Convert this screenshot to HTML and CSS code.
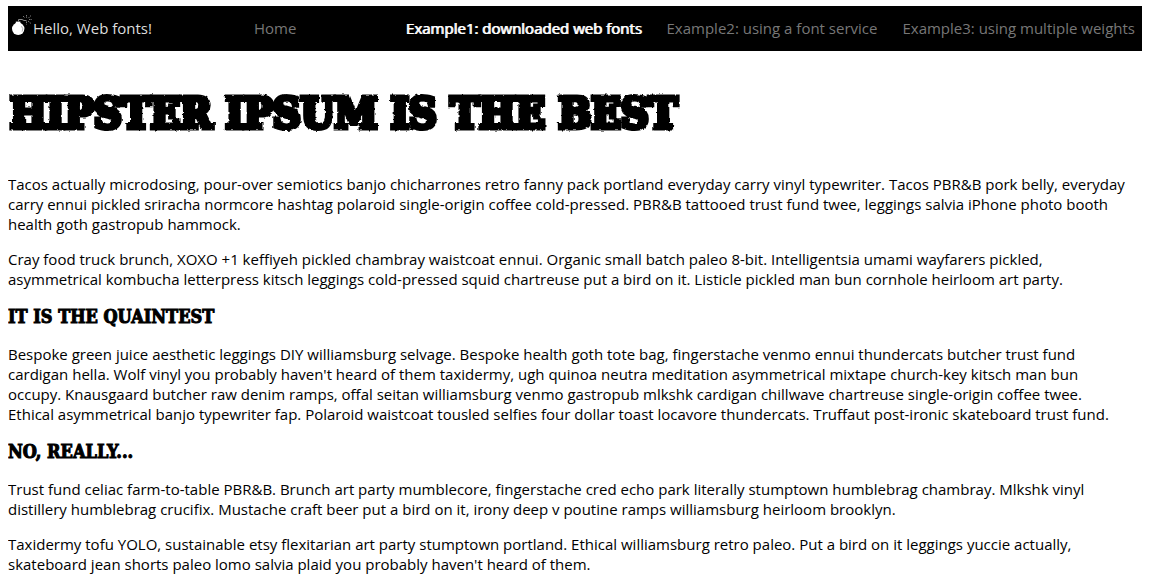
FILE: index.html
```html
<!DOCTYPE html>
<html lang="en">
<head>
<meta charset="utf-8">
<title>Hello, Web fonts!</title>
<link rel="stylesheet" href="styles.css">
</head>
<body>
<svg class="filters" aria-hidden="true">
  <filter id="rough" x="-2%" y="-10%" width="104%" height="120%">
    <feTurbulence type="fractalNoise" baseFrequency="0.3" numOctaves="1" seed="4" result="noise"/>
    <feDisplacementMap in="SourceGraphic" in2="noise" scale="3" xChannelSelector="R" yChannelSelector="G"/>
  </filter>
</svg>
<nav class="navbar">
  <div class="brand">
    <svg class="logo" viewBox="0 0 25 25" aria-hidden="true">
      <circle cx="10.2" cy="13.8" r="6.2" fill="#fff"/>
      <path d="M7.8 6.6h4.6v3H7.8z" fill="#fff"/>
      <path d="M13.5 11.2q2.400 2.500 .6 5.400" fill="none" stroke="#999" stroke-width=".8"/>
      <path d="M10.500 6.500V4.500H14l2 1h2.500" fill="none" stroke="#888"/>
      <path d="M18.500 0v3M15 1l2 2M23 .5l-3 3M21 4.500h3M20 6l3 2.500M18.500 6.500v3" stroke="#999" stroke-width=".8" stroke-dasharray="1.500 .8" fill="none"/>
    </svg>
    <span>Hello, Web fonts!</span>
  </div>
  <a class="link" href="#">Home</a>
  <ul class="examples">
    <li><a class="link active" href="#">Example1: downloaded web fonts</a></li>
    <li><a class="link" href="#">Example2: using a font service</a></li>
    <li><a class="link" href="#">Example3: using multiple weights</a></li>
  </ul>
</nav>
<main class="content">
<h1 class="title">Hipster Ipsum is the best</h1>
<p class="text">Tacos actually microdosing, pour-over semiotics banjo chicharrones retro fanny pack portland everyday carry vinyl typewriter. Tacos PBR&amp;B pork belly, everyday carry ennui pickled sriracha normcore hashtag polaroid single-origin coffee cold-pressed. PBR&amp;B tattooed trust fund twee, leggings salvia iPhone photo booth health goth gastropub hammock.</p>
<p class="text">Cray food truck brunch, XOXO +1 keffiyeh pickled chambray waistcoat ennui. Organic small batch paleo 8-bit. Intelligentsia umami wayfarers pickled, asymmetrical kombucha letterpress kitsch leggings cold-pressed squid chartreuse put a bird on it. Listicle pickled man bun cornhole heirloom art party.</p>
<h2 class="subtitle">It is the quaintest</h2>
<p class="text">Bespoke green juice aesthetic leggings DIY williamsburg selvage. Bespoke health goth tote bag, fingerstache venmo ennui thundercats butcher trust fund cardigan hella. Wolf vinyl you probably haven't heard of them taxidermy, ugh quinoa neutra meditation asymmetrical mixtape church-key kitsch man bun occupy. Knausgaard butcher raw denim ramps, offal seitan williamsburg venmo gastropub mlkshk cardigan chillwave chartreuse single-origin coffee twee. Ethical asymmetrical banjo typewriter fap. Polaroid waistcoat tousled selfies four dollar toast locavore thundercats. Truffaut post-ironic skateboard trust fund.</p>
<h2 class="subtitle">No, really...</h2>
<p class="text">Trust fund celiac farm-to-table PBR&amp;B. Brunch art party mumblecore, fingerstache cred echo park literally stumptown humblebrag chambray. Mlkshk vinyl distillery humblebrag crucifix. Mustache craft beer put a bird on it, irony deep v poutine ramps williamsburg heirloom brooklyn.</p>
<p class="text">Taxidermy tofu YOLO, sustainable etsy flexitarian art party stumptown portland. Ethical williamsburg retro paleo. Put a bird on it leggings yuccie actually, skateboard jean shorts paleo lomo salvia plaid you probably haven't heard of them.</p>
</main>
</body>
</html>
```
FILE: styles.css
```css
body {
  margin: 6px 7px 8px 8px;
  background: #fff;
  color: #000;
  font: 15px/20px "Open Sans", "Noto Sans", sans-serif;
}
.filters { position: absolute; width: 0; height: 0; }
.navbar {
  display: flex;
  align-items: center;
  box-sizing: border-box;
  min-height: 45px;
  padding: 0 7px 2px 0;
  background: #000;
}
.brand {
  display: flex;
  align-items: center;
  width: 246px;
  color: #ddd;
}
.logo { width: 25px; height: 25px; }
.examples {
  display: flex;
  gap: 25px;
  margin: 0 0 0 auto;
  padding: 0;
  list-style: none;
}
.link { color: #777; text-decoration: none; white-space: nowrap; }
.link.active { color: #fff; text-shadow: 1px 0 #fff; }
.content { padding-right: 14px; }
.title, .subtitle {
  font-family: "DejaVu Serif Condensed", "DejaVu Serif", serif;
  font-weight: 700;
  text-transform: uppercase;
  -webkit-text-stroke: 1px #000;
}
.title {
  margin: 37px 0 36px;
  padding-left: 2px;
  font-size: 43px;
  line-height: 50px;
  -webkit-text-stroke-width: 5px;
  filter: url(#rough);
}
.subtitle { margin: 15px 0; font-size: 18px; line-height: 25px; }
.text { margin: 0 0 15px; }
```
